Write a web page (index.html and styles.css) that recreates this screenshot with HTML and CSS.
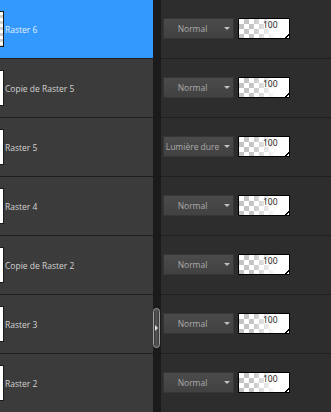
FILE: index.html
```html
<!DOCTYPE html>
<html lang="fr">
<head>
<meta charset="UTF-8">
<meta name="viewport" content="width=device-width, initial-scale=1.0">
<title>Calques</title>
<link rel="stylesheet" href="styles.css">
</head>
<body>

<div class="layers">
  <div class="names">
    <div class="layer selected"><span class="thumb"></span><span class="name">Raster 6</span></div>
    <div class="layer"><span class="thumb"></span><span class="name">Copie de Raster 5</span></div>
    <div class="layer"><span class="thumb"></span><span class="name">Raster 5</span></div>
    <div class="layer"><span class="thumb"></span><span class="name">Raster 4</span></div>
    <div class="layer"><span class="thumb"></span><span class="name">Copie de Raster 2</span></div>
    <div class="layer"><span class="thumb"></span><span class="name">Raster 3</span></div>
    <div class="layer"><span class="thumb"></span><span class="name">Raster 2</span></div>
  </div>

  <div class="splitter">
    <div class="grip"></div>
  </div>

  <div class="props">
    <div class="prop"><div class="blend"><span class="mode">Normal</span></div><div class="opacity">100</div></div>
    <div class="prop"><div class="blend"><span class="mode">Normal</span></div><div class="opacity">100</div></div>
    <div class="prop"><div class="blend"><span class="mode">Lumière dure</span></div><div class="opacity">100</div></div>
    <div class="prop"><div class="blend"><span class="mode">Normal</span></div><div class="opacity">100</div></div>
    <div class="prop"><div class="blend"><span class="mode">Normal</span></div><div class="opacity">100</div></div>
    <div class="prop"><div class="blend"><span class="mode">Normal</span></div><div class="opacity">100</div></div>
    <div class="prop"><div class="blend"><span class="mode">Normal</span></div><div class="opacity">100</div></div>
  </div>
</div>

</body>
</html>
```

FILE: styles.css
```css
body {
  margin: 0;
  padding: 0;
  background-color: #2d2d2d;
  font-family: 'Open Sans', 'Noto Sans', sans-serif;
  font-size: 8.5px;
}
.layers {
  display: flex;
  height: 412px;
  overflow: hidden;
}
.names {
  width: 153px;
  background-color: #3b3b3b;
}
.layer {
  display: flex;
  align-items: center;
  height: 58px;
  border-bottom: 1px solid #1f1f1f;
  color: #d2d2d2;
}
.layer.selected {
  background-color: #3399ff;
  color: #e4eefa;
}
.thumb {
  width: 3px;
  height: 34px;
  background-color: #fff;
  border: 1px solid #1a1a1a;
  border-left: none;
}
.selected .thumb {
  background: repeating-conic-gradient(#d0d0d0 0 25%, #fff 0 50%) 0 0 / 6px 6px;
}
.name {
  margin-left: 1px;
}
.splitter {
  position: relative;
  width: 8px;
  background-color: #1b1b1b;
}
.grip {
  position: absolute;
  left: 0;
  top: 308px;
  width: 5px;
  height: 38px;
  border: 1px solid #a0a0a0;
  border-radius: 4px;
  background: linear-gradient(to right, #3a3a3a, #555, #3a3a3a);
}
.grip::after {
  content: "";
  position: absolute;
  left: 1px;
  top: 16px;
  border-left: 3px solid #e0e0e0;
  border-top: 3px solid transparent;
  border-bottom: 3px solid transparent;
}
.props {
  flex: 1;
}
.prop {
  display: flex;
  align-items: flex-start;
  gap: 4px;
  height: 40px;
  padding: 18px 0 0 2px;
  border-bottom: 1px solid #1f1f1f;
}
.blend {
  position: relative;
  display: flex;
  align-items: center;
  justify-content: center;
  box-sizing: border-box;
  width: 71px;
  height: 21px;
  padding-right: 14px;
  background: linear-gradient(#4b4b4b, #414141);
  border: 1px solid #363636;
  color: #ababab;
  white-space: nowrap;
}
.blend::after {
  content: "";
  position: absolute;
  right: 3px;
  top: 8px;
  border-top: 3px solid #c0c0c0;
  border-left: 3px solid transparent;
  border-right: 3px solid transparent;
}
.mode {
  margin-left: 2px;
}
.opacity {
  position: relative;
  box-sizing: border-box;
  width: 52px;
  height: 21px;
  padding: 1px 0 0 24px;
  border: 1px solid #000;
  color: #111;
  line-height: 10px;
  background:
    linear-gradient(to right, rgba(255, 255, 255, 0) 25%, #fff 75%),
    repeating-conic-gradient(#c4c4c4 0 25%, #fff 0 50%) 0 0 / 10px 10px;
}
.opacity::after {
  content: "";
  position: absolute;
  right: 0;
  bottom: 0;
  width: 5px;
  height: 5px;
  background: linear-gradient(135deg, transparent 0 55%, #000 55% 75%, transparent 75%);
}
```
